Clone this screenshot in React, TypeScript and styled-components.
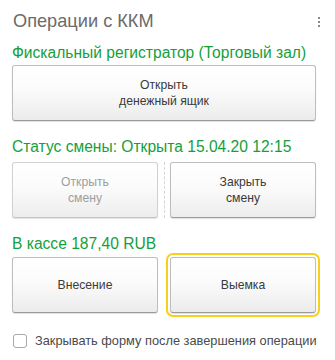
import styled, { createGlobalStyle } from "styled-components";

const GlobalStyle = createGlobalStyle`
  body {
    margin: 0;
    background: #ffffff;
    font-family: "Liberation Sans", Arial, sans-serif;
  }
`;

const Form = styled.div`
  width: 335px;
  height: 360px;
  box-sizing: border-box;
  padding: 10px 19px 0 12px;
  display: flex;
  flex-direction: column;
`;

const Header = styled.div`
  display: flex;
  justify-content: space-between;
  align-items: center;
  height: 22px;
`;

const Title = styled.div`
  font-size: 18.2px;
  line-height: 22px;
  color: #6b6b6b;
  padding-left: 1px;
`;

const MoreDots = styled.div`
  display: flex;
  flex-direction: column;
  gap: 2px;
  margin-right: -4px;
  margin-top: 2px;

  span {
    width: 2px;
    height: 2px;
    background: #8a8a8a;
  }
`;

const GroupLabel = styled.div<{ $top: number }>`
  margin-top: ${(p) => p.$top}px;
  font-size: 15.6px;
  line-height: 18px;
  color: #13a03c;
  white-space: nowrap;
`;

const Row = styled.div<{ $top: number }>`
  display: grid;
  grid-template-columns: 1fr 1fr;
  gap: 12px;
  margin-top: ${(p) => p.$top}px;
  position: relative;
`;

const Divider = styled.div`
  position: absolute;
  left: 50%;
  top: 0;
  bottom: 0;
  border-left: 1px dashed #d4d4d4;
`;

const Button = styled.button<{ $focused?: boolean }>`
  height: 56px;
  width: 100%;
  border: 1px solid #bdbdbd;
  border-bottom-color: #9a9a9a;
  border-radius: 3px;
  background: linear-gradient(#ffffff 0%, #fbfbfb 45%, #ececec 100%);
  box-shadow: 0 1px 1px rgba(0, 0, 0, 0.12);
  font-family: "Liberation Sans", Arial, sans-serif;
  font-size: 12.2px;
  line-height: 16px;
  color: #3a3a3a;
  padding: 0 8px;
  text-align: center;
  cursor: pointer;
  outline: ${(p) => (p.$focused ? "2px solid #f7cf1c" : "none")};
  outline-offset: 2px;

  &:disabled {
    color: #9e9e9e;
    border-color: #d2d2d2;
    border-bottom-color: #c4c4c4;
    cursor: default;
  }
`;

const WideButton = styled(Button)`
  margin-top: 3px;
`;

const CheckRow = styled.label`
  display: flex;
  align-items: center;
  gap: 8px;
  margin-top: 20px;
  padding-left: 1px;
  font-size: 12.8px;
  color: #4a4a4a;
  white-space: nowrap;
`;

const Box = styled.span`
  flex: none;
  width: 12px;
  height: 12px;
  border: 1px solid #a8a8a8;
  border-radius: 3px;
  background: #fff;
`;

const App = () => {
  return (
    <>
      <GlobalStyle />
      <Form>
        <Header>
          <Title>Операции с ККМ</Title>
          <MoreDots>
            <span />
            <span />
            <span />
          </MoreDots>
        </Header>

        <GroupLabel $top={12}>Фискальный регистратор (Торговый зал)</GroupLabel>
        <WideButton>
          Открыть
          <br />
          денежный ящик
        </WideButton>

        <GroupLabel $top={17}>Статус смены: Открыта 15.04.20 12:15</GroupLabel>
        <Row $top={6}>
          <Divider />
          <Button disabled>
            Открыть
            <br />
            смену
          </Button>
          <Button>
            Закрыть
            <br />
            смену
          </Button>
        </Row>

        <GroupLabel $top={17}>В кассе 187,40 RUB</GroupLabel>
        <Row $top={4}>
          <Button>Внесение</Button>
          <Button $focused>Выемка</Button>
        </Row>

        <CheckRow>
          <Box />
          Закрывать форму после завершения операции
        </CheckRow>
      </Form>
    </>
  );
};

export default App;
